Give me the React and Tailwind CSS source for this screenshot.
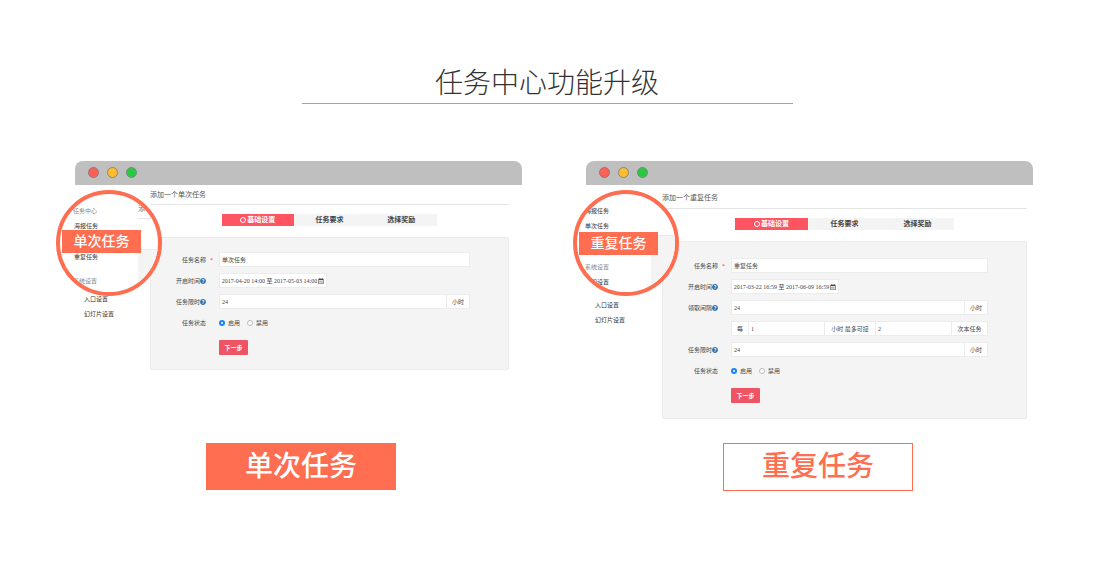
import React, { useState } from 'react';
import { clsx } from 'clsx';
import { FaRegCalendarAlt, FaQuestionCircle } from 'react-icons/fa';

const STEPS = ['基础设置', '任务要求', '选择奖励'];

function TitleBar() {
  return (
    <div className="h-6 bg-[#bfbfbf] rounded-t-lg flex items-center gap-2 pl-[13px] pb-[2px]">
      <span className="size-[11px] rounded-full bg-[#ff5f57] border border-[#8d7a78]" />
      <span className="size-[11px] rounded-full bg-[#ffbd2e] border border-[#8d8578]" />
      <span className="size-[11px] rounded-full bg-[#28c940] border border-[#788d7b]" />
    </div>
  );
}

function Stepper() {
  return (
    <ol className="flex h-3 w-3/5 mx-auto bg-[#f4f4f4] text-[7px] font-bold text-[#444]">
      {STEPS.map((step, i) => (
        <li key={step} className={clsx('flex-1 flex items-center justify-center gap-px', i === 0 && 'bg-[#ff5461] text-white')}>
          {i === 0 && <span className="size-[6px] rounded-full border border-white" />}
          {step}
        </li>
      ))}
    </ol>
  );
}

function Row({ label, htmlFor, required, help, children }) {
  return (
    <div className="flex items-center h-[15px]">
      <label htmlFor={htmlFor} className="w-[55px] shrink-0 flex items-center justify-end">
        {label}
        {help && <FaQuestionCircle className="size-[6px] text-[#2a6fb0]" />}
      </label>
      <span className="w-[13px] shrink-0 pl-1 text-[#f33]">{required && '*'}</span>
      {children}
    </div>
  );
}

const FIELD = 'h-[15px] min-w-0 bg-white border border-[#ececec] px-[2px]';
const ADDON = 'h-[15px] shrink-0 bg-white border border-[#ececec] flex items-center justify-center';

function HoursField({ id }) {
  return (
    <div className="flex flex-1 min-w-0">
      <input id={id} defaultValue="24" className={clsx(FIELD, 'flex-1')} />
      <span className={clsx(ADDON, 'w-[23px] border-l-0')}>小时</span>
    </div>
  );
}

function TaskForm({ id, name, period, repeat }) {
  const [status, setStatus] = useState('on');
  return (
    <form
      onSubmit={e => e.preventDefault()}
      className={clsx(
        'bg-[#f4f4f4] border border-[#ebebeb] rounded-xs pr-[38px] text-[6px] leading-[8px] text-[#444] flex flex-col gap-[6px]',
        repeat ? 'pt-4 pb-[15px]' : 'pt-[14px] pb-[14px]'
      )}
    >
      <Row label="任务名称" htmlFor={`${id}-name`} required>
        <input id={`${id}-name`} defaultValue={name} className={clsx(FIELD, 'flex-1')} />
      </Row>
      <Row label="开启时间" htmlFor={`${id}-period`} help>
        <button id={`${id}-period`} type="button" className="h-[15px] w-[108px] bg-white border border-[#ececec] flex items-center justify-center gap-px whitespace-nowrap">
          {period}
          <FaRegCalendarAlt className="size-[6px]" />
        </button>
      </Row>
      {repeat && (
        <>
          <Row label="领取间隔" htmlFor={`${id}-gap`} help>
            <HoursField id={`${id}-gap`} />
          </Row>
          <Row label="">
            <span className={clsx(ADDON, 'w-[17px] border-r-0')}>每</span>
            <input aria-label="每" defaultValue="1" className={clsx(FIELD, 'flex-1')} />
            <span className={clsx(ADDON, 'w-[50px] border-x-0')}>小时 最多可接</span>
            <input aria-label="最多可接" defaultValue="2" className={clsx(FIELD, 'flex-1')} />
            <span className={clsx(ADDON, 'w-9 border-l-0')}>次本任务</span>
          </Row>
        </>
      )}
      <Row label="任务限时" htmlFor={`${id}-limit`} help>
        <HoursField id={`${id}-limit`} />
      </Row>
      <Row label="任务状态">
        {[['on', '启用'], ['off', '禁用']].map(([value, text]) => (
          <label key={value} className="flex items-center gap-[3px] mr-[7px]">
            <input
              type="radio"
              name={`${id}-status`}
              checked={status === value}
              onChange={() => setStatus(value)}
              className="appearance-none size-[6px] rounded-full bg-white border border-[#bbb] checked:border-2 checked:border-[#1a84f5]"
            />
            {text}
          </label>
        ))}
      </Row>
      <div className="pl-[68px] pt-1">
        <button type="submit" className="block h-[15px] w-[29px] rounded-[1px] bg-[#ed5565] text-white font-bold">下一步</button>
      </div>
    </form>
  );
}

// Round magnifier over the side menu
function Lens({ className, children }) {
  return (
    <div className={clsx('absolute size-[106px] rounded-full border-4 border-[#ff6e50] bg-white overflow-hidden text-[6px] leading-[8px] text-[#333]', className)}>
      {children}
    </div>
  );
}

function Tag({ children }) {
  return <div className="ml-[2px] w-[79px] h-[23px] bg-[#ff6e50] text-white text-[14px] font-medium flex items-center justify-center">{children}</div>;
}

export default function App() {
  return (
    <main lang="zh-CN" className="min-h-screen bg-white pt-[60px] font-['Liberation_Serif','Noto_Sans_CJK_SC',serif]">
      <h1 className="text-center text-[28px] leading-[43px] font-light text-[#333] font-['Noto_Sans_CJK_SC',sans-serif]">
        任务中心功能升级
      </h1>
      <hr className="w-[491px] mx-auto h-px border-0 bg-[#ff8066]" />

      <div className="grid grid-cols-2 gap-16 pl-[75px] pr-[61px] pt-[57px]">
        <section className="relative h-[282px]">
          <TitleBar />
          <div className="flex pr-[13px]">
            <nav className="w-[75px] shrink-0 pl-[9px] pt-[110px] text-[6px] leading-[8px] text-[#333] flex flex-col gap-[7px]">
              <a href="#entry">入口设置</a>
              <a href="#slides">幻灯片设置</a>
            </nav>
            <div className="flex-1 min-w-0">
              <h2 className="h-5 border-b border-[#e5e5e5] text-[7px] leading-[20px] text-[#555]">添加一个单次任务</h2>
              <div className="pt-[9px] pb-[11px]"><Stepper /></div>
              <TaskForm id="single" name="单次任务" period="2017-04-20 14:00 至 2017-05-03 14:00" />
            </div>
          </div>
          <Lens className="-left-[19px] top-[29px]">
            <div className="absolute left-[78px] top-[11px] w-6 h-[14px] border-b border-[#e5e5e5] text-[7px] text-[#777]">添</div>
            <div className="absolute left-[78px] top-[55px] w-6 h-12 bg-[#f4f4f4] border-t border-[#ebebeb]" />
            <nav className="relative pt-[13px] flex flex-col">
              <span className="pl-[13px] text-[#888]">任务中心</span>
              <a href="#poster" className="pl-[14px] pt-[7px]">海报任务</a>
              <Tag>单次任务</Tag>
              <a href="#repeat" className="pl-[14px]">重复任务</a>
              <span className="pl-[13px] pt-4 text-[#888]">系统设置</span>
            </nav>
          </Lens>
        </section>

        <section className="relative h-[282px]">
          <TitleBar />
          <div className="flex pr-[6px]">
            <nav className="w-[76px] shrink-0 pl-[9px] pt-[116px] text-[6px] leading-[8px] text-[#333] flex flex-col gap-[7px]">
              <a href="#entry">入口设置</a>
              <a href="#slides">幻灯片设置</a>
            </nav>
            <div className="flex-1 min-w-0">
              <h2 className="h-6 border-b border-[#e5e5e5] text-[7px] leading-[27px] text-[#555]">添加一个重复任务</h2>
              <div className="pt-[9px] pb-[11px]"><Stepper /></div>
              <TaskForm id="repeat" name="重复任务" period="2017-03-22 16:59 至 2017-06-09 16:59" repeat />
            </div>
          </div>
          <Lens className="-left-[13px] top-[29px]">
            <div className="absolute left-[74px] top-[41px] w-7 h-16 bg-[#f4f4f4] border-t border-[#ebebeb]" />
            <nav className="relative pt-[13px] flex flex-col">
              <a href="#poster" className="pl-[8px]">海报任务</a>
              <a href="#single" className="pl-[8px] pt-[7px]">单次任务</a>
              <div className="pt-[2px]"><Tag>重复任务</Tag></div>
              <span className="pl-[8px] pt-2 text-[#888]">系统设置</span>
              <a href="#notice" className="pl-[8px] pt-[7px]">通知设置</a>
            </nav>
          </Lens>
        </section>
      </div>

      <div className="grid grid-cols-2 gap-16 pl-[75px] pr-[61px]">
        <div className="pl-[131px]">
          <button type="button" className="block w-[190px] h-[47px] bg-[#ff6e50] text-white text-[28px] leading-[45px] font-medium">单次任务</button>
        </div>
        <div className="pl-[137px]">
          <button type="button" className="block w-[190px] h-12 border border-[#ff6e50] bg-white text-[#ff6e50] text-[28px] leading-[44px] font-medium">重复任务</button>
        </div>
      </div>
    </main>
  );
}
